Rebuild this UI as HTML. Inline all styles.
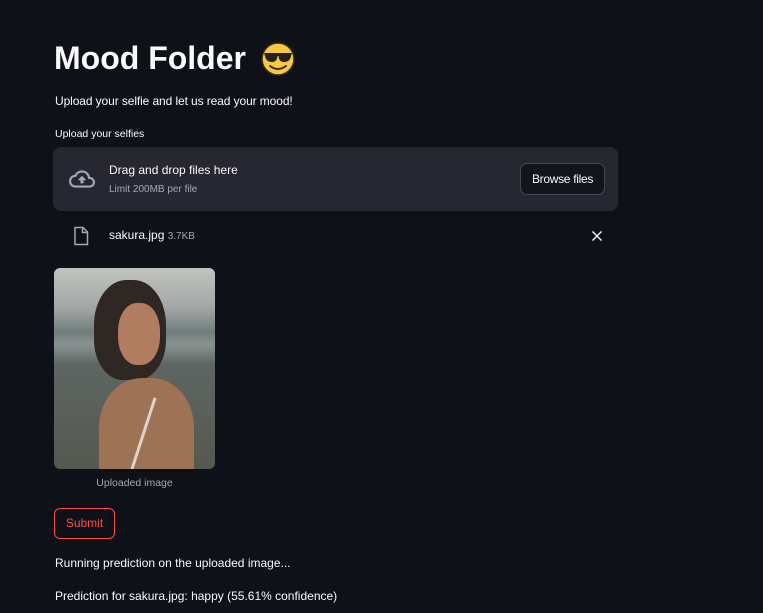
<!DOCTYPE html>
<html><head><meta charset="utf-8"><style>
*{margin:0;padding:0;box-sizing:border-box}
body{width:763px;height:613px;background:#0e1117;color:#fafafa;font-family:"Liberation Sans",sans-serif;position:relative;overflow:hidden}
.a{position:absolute;white-space:nowrap}
</style></head><body>
<div class="a" style="left:54px;top:40px;font-size:32px;font-weight:bold;letter-spacing:0">Mood Folder</div>
<svg class="a" style="left:259px;top:41px" width="38" height="36" viewBox="0 0 38 36">
<circle cx="19" cy="18" r="16" fill="#f7c844" stroke="#3a2a10" stroke-width="1.5"/>
<path d="M5 12 H33 L32 15 Q31 21 25 21 Q20 21 19.5 15 H18.5 Q18 21 13 21 Q7 21 6 15 Z" fill="#222"/>
<path d="M11 25 Q19 31 27 25" stroke="#3a2a10" stroke-width="2" fill="none" stroke-linecap="round"/>
</svg>
<div class="a" style="left:55px;top:94px;font-size:12px;letter-spacing:-0.1px">Upload your selfie and let us read your mood!</div>
<div class="a" style="left:55px;top:128px;font-size:10.5px">Upload your selfies</div>
<div class="a" style="left:53px;top:147px;width:565px;height:64px;background:#262730;border-radius:8px"></div>
<svg class="a" style="left:66px;top:166px" width="32" height="26" viewBox="0 0 24 24"><path d="M19.35 10.04A7.49 7.49 0 0 0 12 4C9.11 4 6.6 5.64 5.35 8.04A5.994 5.994 0 0 0 0 14c0 3.310 2.69 6 6 6h13c2.76 0 5-2.24 5-5 0-2.64-2.05-4.78-4.65-4.96zM19 18H6c-2.21 0-4-1.790-4-4 0-2.05 1.53-3.76 3.56-3.970l1.07-.11.5-.95A5.469 5.469 0 0 1 12 6c2.62 0 4.88 1.86 5.39 4.43l.3 1.5 1.53.11A2.98 2.98 0 0 1 22 15c0 1.65-1.35 3-3 3zM8 13h2.55v3h2.9v-3H16l-4-4z" fill="#a3a8b8"/></svg>
<div class="a" style="left:109px;top:163px;font-size:12px">Drag and drop files here</div>
<div class="a" style="left:109px;top:184px;font-size:10px;color:#a3a8b8">Limit 200MB per file</div>
<div class="a" style="left:520px;top:163px;width:85px;height:32px;border:1px solid #444654;border-radius:7px;background:#13151c;font-size:12px;line-height:30px;text-align:center;letter-spacing:-0.3px">Browse files</div>
<svg class="a" style="left:72px;top:226px" width="18" height="20" viewBox="0 0 18 20"><path d="M3 1.5H11L15.5 6V18.5H3Z" fill="none" stroke="#a3a8b8" stroke-width="1.5"/><path d="M10.5 1.5V6.5H15.5" fill="none" stroke="#a3a8b8" stroke-width="1.5"/></svg>
<div class="a" style="left:109px;top:228px;font-size:12px">sakura.jpg <span style="font-size:10px;color:#a3a8b8">3.7KB</span></div>
<svg class="a" style="left:591px;top:230px" width="12" height="12" viewBox="0 0 12 12"><path d="M1.5 1.5L10.5 10.5M10.5 1.5L1.5 10.5" stroke="#fafafa" stroke-width="1.4"/></svg>
<div class="a" style="left:54px;top:268px;width:161px;height:201px;border-radius:6px;overflow:hidden;background:linear-gradient(#c0c3bf 0%,#a2a7a5 20%,#6f7d7c 32%,#8a9391 38%,#5e6663 48%,#55584f 100%)">
<div class="a" style="left:40px;top:12px;width:72px;height:100px;border-radius:45% 45% 40% 40%;background:#2e2723"></div>
<div class="a" style="left:64px;top:35px;width:42px;height:62px;border-radius:45%;background:#b07d60"></div>
<div class="a" style="left:45px;top:110px;width:95px;height:110px;border-radius:45% 45% 0 0;background:#9e7355"></div>
<div class="a" style="left:88px;top:128px;width:3px;height:75px;background:#ddd3cc;transform:rotate(18deg)"></div>
</div>
<div class="a" style="left:54px;top:477px;width:161px;text-align:center;font-size:10.5px;color:#a3a8b8">Uploaded image</div>
<div class="a" style="left:54px;top:508px;width:61px;height:31px;border:1px solid #ff4b4b;border-radius:6px;color:#ff4b4b;font-size:12px;line-height:29px;text-align:center">Submit</div>
<div class="a" style="left:55px;top:556px;font-size:12px">Running prediction on the uploaded image...</div>
<div class="a" style="left:55px;top:589px;font-size:12px">Prediction for sakura.jpg: happy (55.61% confidence)</div>
</body></html>
